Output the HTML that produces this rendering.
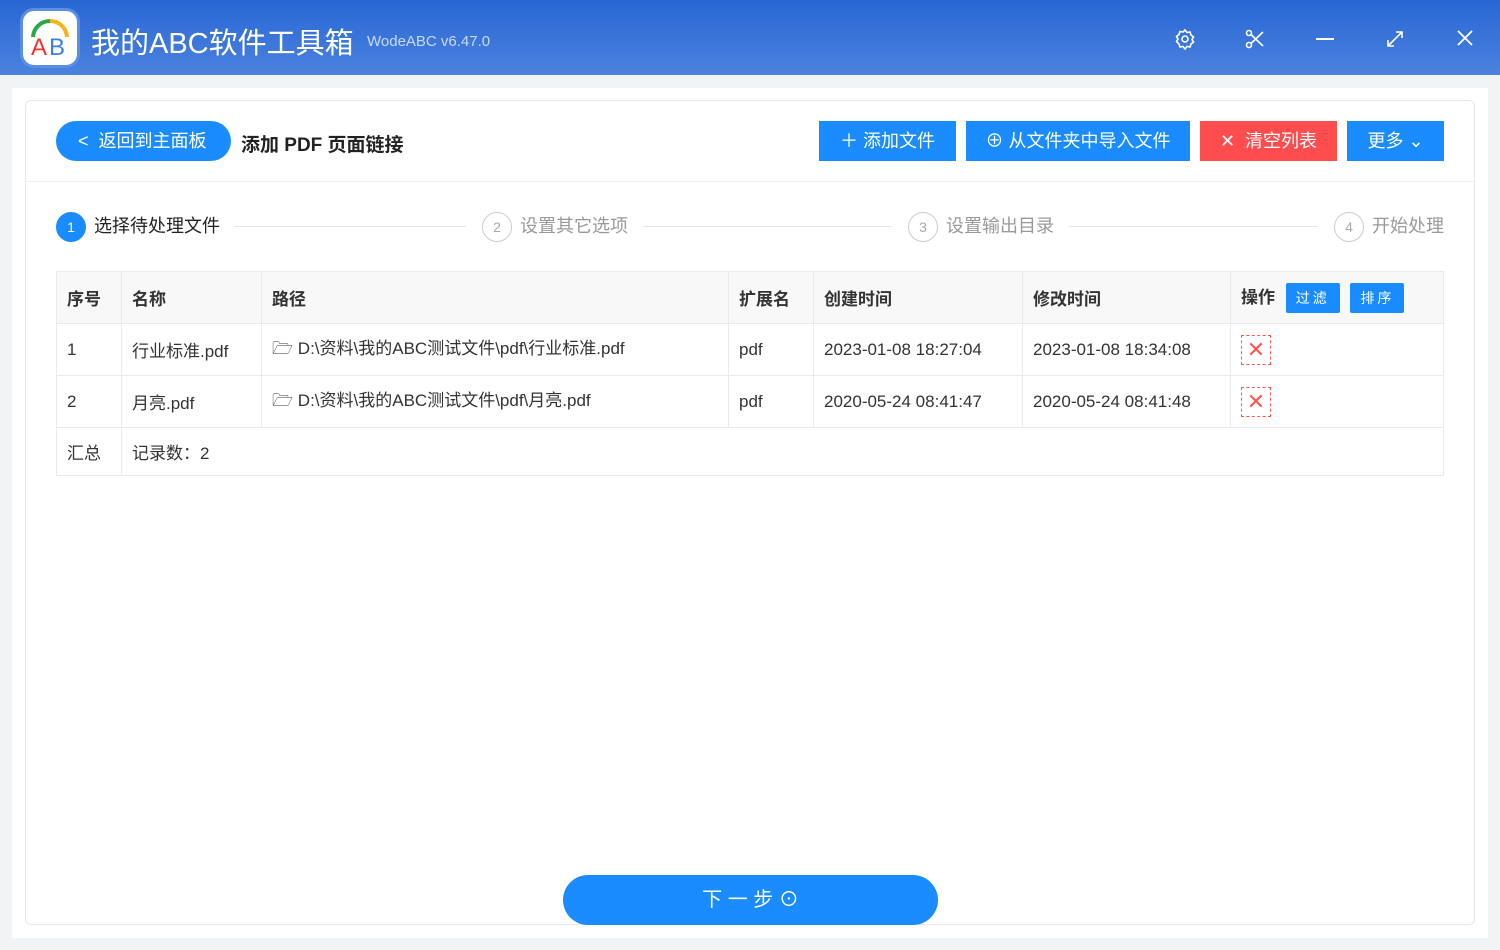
<!DOCTYPE html>
<html><head><meta charset="utf-8"><style>
*{box-sizing:border-box;margin:0;padding:0}
body{width:1500px;height:950px;background:#f2f3f5;font-family:"Liberation Sans","Noto Sans CJK SC",sans-serif;position:relative;overflow:hidden;color:#333}
.hdr{position:absolute;left:0;top:0;width:1500px;height:75px;background:linear-gradient(#2867d3,#4c82df)}
.logo{position:absolute;left:20px;top:8px;width:60px;height:60px;border-radius:14px;background:#fff;border:3px solid #5b8fe6}
.title{position:absolute;left:91px;top:20px;color:#fff;font-size:29px}
.ver{position:absolute;left:367px;top:33px;color:#c9d8f5;font-size:15px}
.ic{position:absolute;top:28px;color:#fff}
.wrap{position:absolute;left:12px;top:88px;width:1476px;height:850px;background:#fff}
.card{position:absolute;left:25px;top:100px;width:1450px;height:825px;border:1px solid #e8e8e8;border-radius:6px;background:#fff}
.abs{position:absolute}
.btn{position:absolute;top:121px;height:40px;background:#1a8cff;color:#fff;font-size:18px;line-height:40px;text-align:center}
.step{position:absolute;top:212px;font-size:18px;color:#999}
.circ{display:inline-block;width:30px;height:30px;border:1px solid #ccc;border-radius:50%;text-align:center;line-height:28px;font-size:14px;color:#aaa;vertical-align:middle;margin-right:8px}
.line{position:absolute;top:226px;height:1px;background:#e5e5e5}
table{position:absolute;left:56px;top:271px;width:1388px;border-collapse:collapse;font-size:17px;color:#333}
td{border:1px solid #eaeaea;padding:0 10px;height:52px}
tr.h td{background:#f8f8f8;font-weight:bold;height:52px}
tr.s td{height:48px}
.tb{display:inline-block;background:#1a8cff;color:#fff;font-size:14px;font-weight:normal;padding:0 10px;height:30px;line-height:30px;border-radius:2px;margin-left:6px;letter-spacing:3px}
.del{display:inline-block;width:30px;height:30px;border:1px dashed #f55;color:#f55;text-align:center;line-height:28px;font-size:22px}
</style></head><body>
<div class="hdr"></div>
<div class="logo"><svg width="54" height="54" viewBox="0 0 54 54"><path d="M10 26 A17 17 0 0 1 27 10" stroke="#2aa845" stroke-width="4" fill="none"/><path d="M27 10 A17 17 0 0 1 44 26" stroke="#f6b51a" stroke-width="4" fill="none"/><text x="8" y="44" font-size="24" font-family="Liberation Sans" fill="#e33">A</text><text x="26" y="44" font-size="24" font-family="Liberation Sans" fill="#3b7ee8">B</text></svg></div>
<div class="title">我的ABC软件工具箱</div>
<div class="ver">WodeABC v6.47.0</div>
<svg class="ic" style="left:1174px;top:28px" width="22" height="22" viewBox="0 0 22 22" fill="none" stroke="#fff" stroke-width="1.6"><circle cx="11" cy="11" r="3"/><path d="M11 2l2 2.5 3-.5 1 3 2.5 2-1.5 2.5 1.5 2.5-2.5 2-1 3-3-.5-2 2.5-2-2.5-3 .5-1-3L2.5 13.5 4 11 2.5 8.5 5 6.5l1-3 3 .5z"/></svg>
<svg class="ic" style="left:1245px;top:29px" width="20" height="20" viewBox="0 0 20 20" fill="none" stroke="#fff" stroke-width="1.6"><circle cx="4" cy="4" r="2.5"/><circle cx="4" cy="16" r="2.5"/><path d="M6 5.5L18 17M6 14.5L18 3"/></svg>
<div class="ic" style="left:1316px;top:38px;width:18px;height:2px;background:#fff"></div>
<svg class="ic" style="left:1386px;top:30px" width="18" height="18" viewBox="0 0 18 18" fill="none" stroke="#fff" stroke-width="1.6"><path d="M2 16L16 2M10 2h6v6M2 10v6h6"/></svg>
<svg class="ic" style="left:1457px;top:30px" width="16" height="16" viewBox="0 0 16 16" stroke="#fff" stroke-width="1.8"><path d="M1 1L15 15M15 1L1 15"/></svg>
<div class="wrap"></div>
<div class="card"></div>
<div class="abs" style="left:56px;top:121px;width:175px;height:40px;border-radius:20px;background:#1a8cff;color:#fff;font-size:18px;line-height:40px;padding-left:22px">&lt;&nbsp; 返回到主面板</div>
<div class="abs" style="left:241px;top:130px;font-size:19px;font-weight:bold;color:#222">添加 PDF 页面链接</div>
<div class="btn" style="left:819px;width:137px">＋ 添加文件</div>
<div class="btn" style="left:966px;width:224px">⊕ 从文件夹中导入文件</div>
<div class="btn" style="left:1200px;width:137px;background:#ff4d4f">✕ &nbsp;清空列表</div>
<div class="btn" style="left:1347px;width:97px">更多 ⌄</div>
<div class="abs" style="left:26px;top:181px;width:1448px;height:1px;background:#eee"></div>
<div class="step" style="left:56px;color:#222"><span class="circ" style="background:#1a8cff;border-color:#1a8cff;color:#fff">1</span>选择待处理文件</div>
<div class="line" style="left:234px;width:232px"></div>
<div class="step" style="left:482px"><span class="circ">2</span>设置其它选项</div>
<div class="line" style="left:643px;width:249px"></div>
<div class="step" style="left:908px"><span class="circ">3</span>设置输出目录</div>
<div class="line" style="left:1069px;width:249px"></div>
<div class="step" style="left:1334px"><span class="circ">4</span>开始处理</div>
<table>
<tr class="h"><td style="width:65px">序号</td><td style="width:140px">名称</td><td style="width:467px">路径</td><td style="width:85px">扩展名</td><td style="width:209px">创建时间</td><td style="width:208px">修改时间</td><td>操作 <span class="tb">过滤</span> <span class="tb">排序</span></td></tr>
<tr><td>1</td><td>行业标准.pdf</td><td>🗁 D:\资料\我的ABC测试文件\pdf\行业标准.pdf</td><td>pdf</td><td>2023-01-08 18:27:04</td><td>2023-01-08 18:34:08</td><td><span class="del">✕</span></td></tr>
<tr><td>2</td><td>月亮.pdf</td><td>🗁 D:\资料\我的ABC测试文件\pdf\月亮.pdf</td><td>pdf</td><td>2020-05-24 08:41:47</td><td>2020-05-24 08:41:48</td><td><span class="del">✕</span></td></tr>
<tr class="s"><td>汇总</td><td colspan="6">记录数：2</td></tr>
</table>
<div class="abs" style="left:563px;top:875px;width:375px;height:50px;border-radius:25px;background:#1a8cff;color:#fff;font-size:20px;line-height:50px;text-align:center">下 一 步 ⊙</div>
</body></html>
